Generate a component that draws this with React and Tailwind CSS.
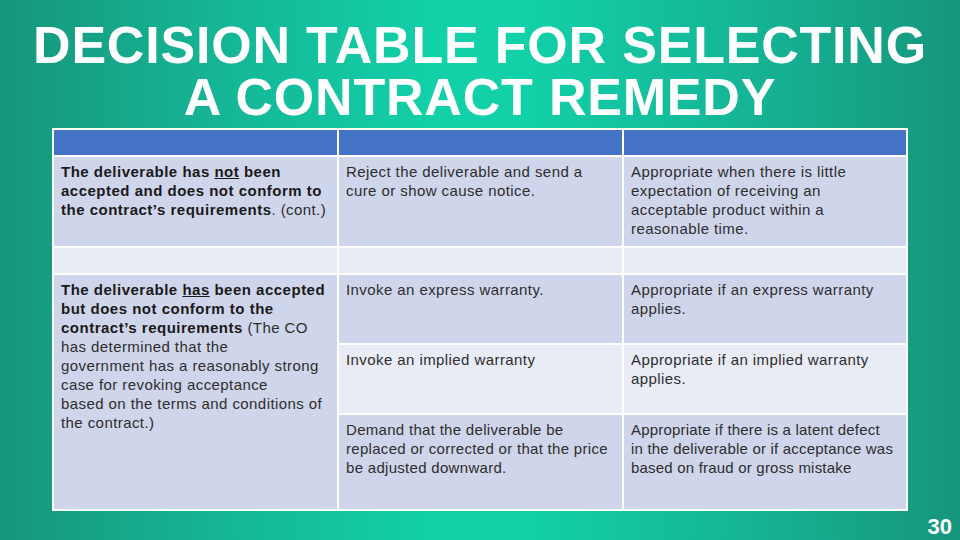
import React from "react";

const F = { fontFamily: '"Liberation Sans", Arial, sans-serif' };

function Cell({ className = "", children }) {
  return (
    <div
      className={`px-[7px] pt-[5px] text-[15px] leading-[19px] whitespace-nowrap text-[#2e2e2e] ${className}`}
    >
      {children}
    </div>
  );
}

export default function App() {
  return (
    <div
      className="w-[960px] h-[540px] overflow-hidden flex flex-col bg-[linear-gradient(90deg,#16967c_0%,#15b495_22%,#12d0a8_45%,#12d0a8_55%,#15b495_78%,#16967c_100%)]"
      style={F}
    >
      <h1 className="pt-[19px] text-center text-white font-bold text-[52px] leading-[52px] tracking-[0.8px]">
        DECISION TABLE FOR SELECTING
        <br />
        A CONTRACT REMEDY
      </h1>
      <div className="mt-[5px] ml-[52px] w-[856px] grid grid-cols-[283px_283px_282px] grid-rows-[25px_89px_25px_68px_68px_94px] gap-[2px] p-[2px] bg-white">
        <div className="bg-[#4472c4]" />
        <div className="bg-[#4472c4]" />
        <div className="bg-[#4472c4]" />

        <Cell className="bg-[#cfd5ea] tracking-[0.42px]">
          <span className="font-bold text-[#1a1a1a] tracking-[0.5px]">
            The deliverable has <span className="underline">not</span> been
            <br />
            accepted and does not conform to
            <br />
            the contract’s requirements
          </span>
          . (cont.)
        </Cell>
        <Cell className="bg-[#cfd5ea] tracking-[0.42px]">
          Reject the deliverable and send a
          <br />
          cure or show cause notice.
        </Cell>
        <Cell className="bg-[#cfd5ea] tracking-[0.42px]">
          Appropriate when there is little
          <br />
          expectation of receiving an
          <br />
          acceptable product within a
          <br />
          reasonable time.
        </Cell>

        <div className="bg-[#e9ebf5]" />
        <div className="bg-[#e9ebf5]" />
        <div className="bg-[#e9ebf5]" />

        <Cell className="bg-[#cfd5ea] row-span-3 tracking-[0.42px]">
          <span className="font-bold text-[#1a1a1a] tracking-[0.5px]">
            The deliverable <span className="underline">has</span> been accepted
            <br />
            but does not conform to the
            <br />
            contract’s requirements
          </span>{" "}
          (The CO
          <br />
          has determined that the
          <br />
          government has a reasonably strong
          <br />
          case for revoking acceptance
          <br />
          based on the terms and conditions of
          <br />
          the contract.)
        </Cell>
        <Cell className="bg-[#cfd5ea] tracking-[0.42px]">Invoke an express warranty.</Cell>
        <Cell className="bg-[#cfd5ea] tracking-[0.42px]">
          Appropriate if an express warranty
          <br />
          applies.
        </Cell>

        <Cell className="bg-[#e9ebf5] tracking-[0.42px]">Invoke an implied warranty</Cell>
        <Cell className="bg-[#e9ebf5] tracking-[0.42px]">
          Appropriate if an implied warranty
          <br />
          applies.
        </Cell>

        <Cell className="bg-[#cfd5ea] tracking-[0.3px]">
          Demand that the deliverable be
          <br />
          replaced or corrected or that the price
          <br />
          be adjusted downward.
        </Cell>
        <Cell className="bg-[#cfd5ea] tracking-[0.2px]">
          Appropriate if there is a latent defect
          <br />
          in the deliverable or if acceptance was
          <br />
          based on fraud or gross mistake
        </Cell>
      </div>
      <div className="mt-[5px] flex justify-end pr-[8px] text-white font-bold text-[22px] leading-[22px]">30</div>
    </div>
  );
}
